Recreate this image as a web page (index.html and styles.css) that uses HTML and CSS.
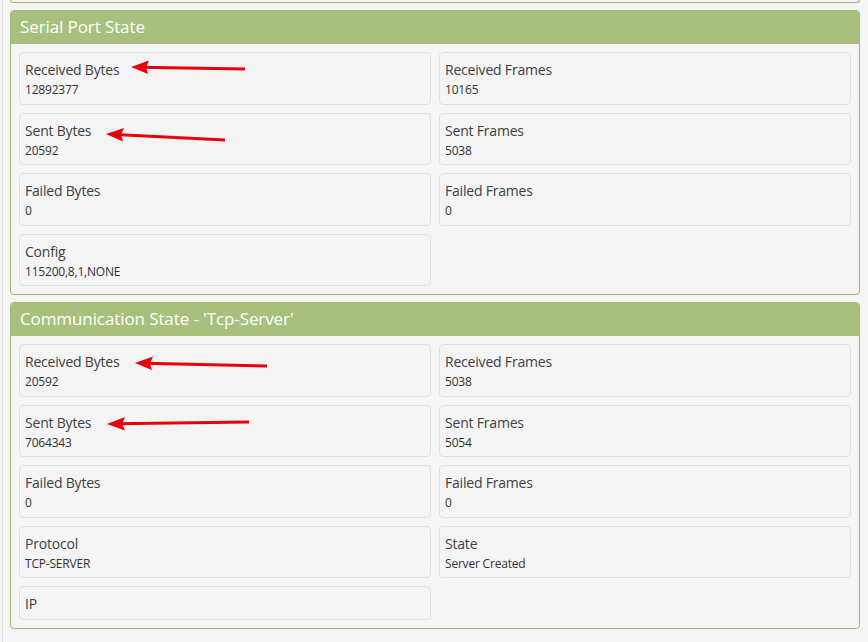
FILE: index.html
```html
<!DOCTYPE html>
<html>
<head>
<meta charset="utf-8">
<link rel="stylesheet" href="styles.css">
</head>
<body>
<div class="page">
  <div class="panel-stub"></div>

  <section class="panel">
    <div class="panel-head">Serial Port State</div>
    <div class="panel-body">
      <div class="card"><div class="label">Received Bytes</div><div class="value">12892377</div></div>
      <div class="card"><div class="label">Received Frames</div><div class="value">10165</div></div>
      <div class="card"><div class="label">Sent Bytes</div><div class="value">20592</div></div>
      <div class="card"><div class="label">Sent Frames</div><div class="value">5038</div></div>
      <div class="card"><div class="label">Failed Bytes</div><div class="value">0</div></div>
      <div class="card"><div class="label">Failed Frames</div><div class="value">0</div></div>
      <div class="card"><div class="label">Config</div><div class="value">115200,8,1,NONE</div></div>
    </div>
  </section>

  <section class="panel">
    <div class="panel-head">Communication State - 'Tcp-Server'</div>
    <div class="panel-body">
      <div class="card"><div class="label">Received Bytes</div><div class="value">20592</div></div>
      <div class="card"><div class="label">Received Frames</div><div class="value">5038</div></div>
      <div class="card"><div class="label">Sent Bytes</div><div class="value">7064343</div></div>
      <div class="card"><div class="label">Sent Frames</div><div class="value">5054</div></div>
      <div class="card"><div class="label">Failed Bytes</div><div class="value">0</div></div>
      <div class="card"><div class="label">Failed Frames</div><div class="value">0</div></div>
      <div class="card"><div class="label">Protocol</div><div class="value">TCP-SERVER</div></div>
      <div class="card"><div class="label">State</div><div class="value">Server Created</div></div>
      <div class="card"><div class="label">IP</div></div>
    </div>
  </section>
</div>

<svg class="arrows" width="868" height="642" viewBox="0 0 868 642">
  <g fill="#e8000c" stroke="#e8000c">
    <line x1="245" y1="69" x2="140" y2="67.2" stroke-width="3"/>
    <polygon points="131,67 149,60.5 146,67.3 148,74" stroke="none"/>
    <line x1="225" y1="140" x2="115" y2="134.5" stroke-width="3"/>
    <polygon points="106,134 124,128 121,134.6 123,141.5" stroke="none"/>
    <line x1="267" y1="366" x2="144" y2="363.3" stroke-width="3"/>
    <polygon points="135,363 153,356.5 150,363.4 152,370" stroke="none"/>
    <line x1="249" y1="422" x2="116" y2="423.8" stroke-width="3"/>
    <polygon points="107,424 125,417 122,423.8 125,430.5" stroke="none"/>
  </g>
</svg>
</body>
</html>
```

FILE: styles.css
```css
html, body {
  margin: 0;
  padding: 0;
  background: #f4f5f4;
}

body {
  font-family: "Open Sans", "Noto Sans", "Liberation Sans", sans-serif;
  color: #3a3a3a;
  width: 868px;
  height: 642px;
  overflow: hidden;
  position: relative;
}

.page {
  margin-left: 2px;
  border-left: 1px solid #dcdedc;
  min-height: 642px;
  padding-right: 8px;
}

.panel-stub {
  margin-left: 7px;
  height: 2px;
  border: 1px solid #9fb873;
  border-top: none;
  border-radius: 0 0 4px 4px;
}

.panel {
  margin: 7px 0 0 7px;
  border: 1px solid #9fb873;
  border-radius: 4px;
  overflow: hidden;
}

.panel + .panel {
  margin-top: 7px;
}

.panel-head {
  background: #a9bf7e;
  color: #ffffff;
  font-size: 17px;
  height: 33px;
  line-height: 32px;
  padding-left: 9px;
  letter-spacing: -0.1px;
}

.panel-body {
  display: grid;
  grid-template-columns: 1fr 1fr;
  gap: 8px;
  padding: 8px;
}

.card {
  background: #f4f4f4;
  border: 1px solid #e0e0e0;
  border-radius: 4px;
  padding: 7px 5px 4.5px;
}

.label {
  font-size: 14px;
  line-height: 20px;
  color: #404040;
  letter-spacing: -0.2px;
}

.value {
  font-size: 12px;
  line-height: 19px;
  color: #333;
  letter-spacing: -0.2px;
}

.arrows {
  position: absolute;
  left: 0;
  top: 0;
  pointer-events: none;
}
```
